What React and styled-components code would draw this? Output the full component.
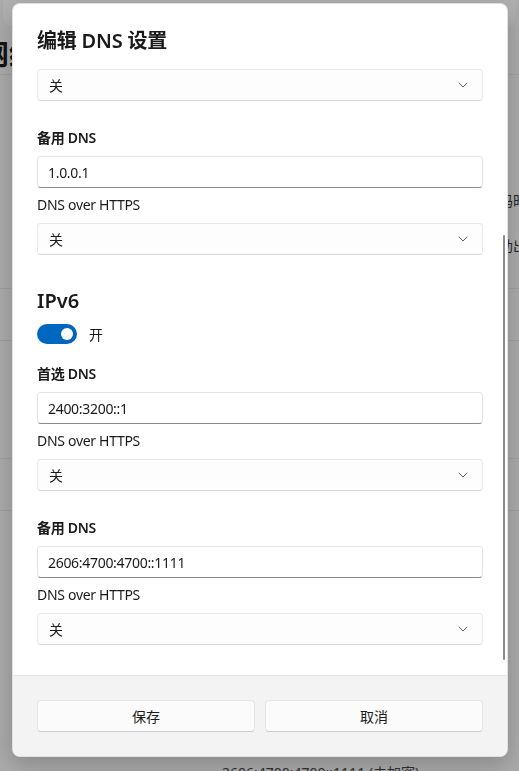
import React, { useState } from 'react';
import styled, { createGlobalStyle } from 'styled-components';

const GlobalStyle = createGlobalStyle`
  html, body {
    margin: 0;
    padding: 0;
    width: 519px;
    height: 771px;
    overflow: hidden;
    font-family: "Noto Sans", "Noto Sans CJK SC", sans-serif;
    color: #1a1a1a;
  }
`;

const font = `"Noto Sans", "Noto Sans CJK SC", sans-serif`;

// 背景的设置页面（被遮罩盖住）
const Page = styled.div`
  width: 519px;
  height: 771px;
  background: #f3f3f3;
  display: flex;
  flex-direction: column;
  overflow: hidden;
`;

const SearchBox = styled.div`
  height: 38px;
  margin: -12px 3px 0;
  border-radius: 10px;
  background: #fbfbfb;
  flex-shrink: 0;
`;

const PageTitle = styled.div`
  margin: 8px 0 0 -19px;
  height: 50px;
  font-size: 28px;
  font-weight: 600;
  line-height: 40px;
  color: #1a1a1a;
  white-space: nowrap;
`;

const PageRow = styled.div`
  flex-shrink: 0;
  box-sizing: border-box;
  height: ${(p) => p.h}px;
  border-top: 1px solid #e3e3e3;
  display: flex;
  flex-direction: column;
  align-items: flex-end;
  padding-top: ${(p) => p.pt || 0}px;
  gap: 25px;
  margin-right: -8px;
  font-size: 14px;
  line-height: 20px;
  color: #333;
  white-space: nowrap;
`;

const PageFoot = styled.div`
  flex-shrink: 0;
  padding: 115px 0 0 222px;
  font-size: 14px;
  line-height: 20px;
  color: #444;
  white-space: nowrap;
`;

const Overlay = styled.div`
  position: fixed;
  inset: 0;
  background: rgba(0, 0, 0, 0.3);
  display: flex;
  align-items: flex-start;
`;

const Dialog = styled.div`
  position: relative;
  margin: 3px 0 0 12px;
  width: 496px;
  height: 754px;
  box-sizing: border-box;
  background: #ffffff;
  border: 1px solid rgba(0, 0, 0, 0.12);
  border-radius: 8px;
  box-shadow: 0 8px 24px rgba(0, 0, 0, 0.2);
  overflow: hidden;
  display: flex;
  flex-direction: column;
  font-family: ${font};
`;

const Body = styled.div`
  flex: 1;
  min-height: 0;
  padding: 23px 24px 0;
  overflow: hidden;
`;

const Title = styled.h1`
  margin: 0;
  height: 28px;
  font-size: 20px;
  line-height: 28px;
  font-weight: 600;
  letter-spacing: -0.2px;
  color: #1a1a1a;
`;

const Content = styled.div`
  margin-top: 14px;
  display: flex;
  flex-direction: column;
`;

const Group = styled.div`
  display: flex;
  flex-direction: column;
  gap: 7px;
  margin-top: ${(p) => p.mt || 0}px;
`;

const Field = styled.div`
  display: flex;
  flex-direction: column;
  gap: 8px;
`;

const Label = styled.div`
  height: 20px;
  font-size: 14px;
  line-height: 20px;
  letter-spacing: -0.3px;
  font-weight: ${(p) => (p.strong ? 600 : 400)};
  color: #1a1a1a;
`;

const SectionTitle = styled.h2`
  margin: 0;
  height: 28px;
  font-size: 20px;
  line-height: 28px;
  font-weight: 600;
  color: #1a1a1a;
`;

const TextBox = styled.div`
  height: 32px;
  box-sizing: border-box;
  border: 1px solid #e5e5e5;
  border-bottom: 1px solid #8a8a8a;
  border-radius: 4px;
  background: #ffffff;
  padding: 0 10px;
  display: flex;
  align-items: center;
  font-size: 14px;
  letter-spacing: -0.3px;
  color: #1a1a1a;
`;

const Select = styled.div`
  height: 32px;
  box-sizing: border-box;
  border: 1px solid #e8e8e8;
  border-bottom-color: #d6d6d6;
  border-radius: 4px;
  background: #fdfdfd;
  padding: 0 14px 0 11px;
  display: flex;
  align-items: center;
  justify-content: space-between;
  font-size: 14px;
  color: #1a1a1a;
`;

const ToggleRow = styled.div`
  margin-top: 9px;
  display: flex;
  align-items: center;
  gap: 12px;
  font-size: 14px;
  height: 20px;
`;

const Track = styled.button`
  width: 40px;
  height: 20px;
  border-radius: 10px;
  border: none;
  padding: 0 4px;
  background: ${(p) => (p.on ? '#0067c0' : '#ffffff')};
  display: flex;
  align-items: center;
  justify-content: ${(p) => (p.on ? 'flex-end' : 'flex-start')};
  cursor: pointer;
`;

const Knob = styled.span`
  width: 12px;
  height: 12px;
  border-radius: 50%;
  background: #ffffff;
`;

const Footer = styled.div`
  flex-shrink: 0;
  height: 81px;
  box-sizing: border-box;
  border-top: 1px solid #e5e5e5;
  background: #f3f3f3;
  padding: 24px 24px;
  display: grid;
  grid-template-columns: 1fr 1fr;
  gap: 10px;
`;

const Button = styled.button`
  height: 32px;
  border: 1px solid #e5e5e5;
  border-bottom-color: #cccccc;
  border-radius: 4px;
  background: #fbfbfb;
  font-family: ${font};
  font-size: 14px;
  color: #1a1a1a;
  cursor: pointer;
`;

const ScrollThumb = styled.div`
  position: absolute;
  left: 490px;
  top: 231px;
  width: 2px;
  height: 425px;
  border-radius: 1px;
  background: #8a8a8a;
`;

const Chevron = () => (
  <svg width="10" height="6" viewBox="0 0 10 6" fill="none">
    <path d="M1 1 L5 5 L9 1" stroke="#5f5f5f" strokeWidth="1" strokeLinecap="round" strokeLinejoin="round" />
  </svg>
);

const Dropdown = ({ value }) => (
  <Select>
    <span>{value}</span>
    <Chevron />
  </Select>
);

const App = () => {
  const [ipv6, setIpv6] = useState(true);

  return (
    <>
      <GlobalStyle />
      <Page>
        <SearchBox />
        <PageTitle>网络和 Internet</PageTitle>
        <PageRow h={214} pt={116}>
          <span>以便在更新 DNS 设置时使用加密码时</span>
          <span>在设备上运行的应用帮助出</span>
        </PageRow>
        <PageRow h={52} />
        <PageRow h={118} />
        <PageRow h={52} />
        <PageRow h={138} />
        <PageFoot>2606:4700:4700::1111 (未加密)</PageFoot>
      </Page>
      <Overlay>
        <Dialog>
          <Body>
            <Title>编辑 DNS 设置</Title>
            <Content>
              <Dropdown value="关" />
              <Group mt={27}>
                <Field>
                  <Label strong>备用 DNS</Label>
                  <TextBox>1.0.0.1</TextBox>
                </Field>
                <Field>
                  <Label>DNS over HTTPS</Label>
                  <Dropdown value="关" />
                </Field>
              </Group>
              <Group mt={32}>
                <SectionTitle>IPv6</SectionTitle>
              </Group>
              <ToggleRow>
                <Track on={ipv6 ? 1 : 0} onClick={() => setIpv6(!ipv6)}>
                  <Knob />
                </Track>
                <span>{ipv6 ? '开' : '关'}</span>
              </ToggleRow>
              <Group mt={20}>
                <Field>
                  <Label strong>首选 DNS</Label>
                  <TextBox>2400:3200::1</TextBox>
                </Field>
                <Field>
                  <Label>DNS over HTTPS</Label>
                  <Dropdown value="关" />
                </Field>
              </Group>
              <Group mt={27}>
                <Field>
                  <Label strong>备用 DNS</Label>
                  <TextBox>2606:4700:4700::1111</TextBox>
                </Field>
                <Field>
                  <Label>DNS over HTTPS</Label>
                  <Dropdown value="关" />
                </Field>
              </Group>
            </Content>
          </Body>
          <Footer>
            <Button type="button">保存</Button>
            <Button type="button">取消</Button>
          </Footer>
          <ScrollThumb />
        </Dialog>
      </Overlay>
    </>
  );
};

export default App;
